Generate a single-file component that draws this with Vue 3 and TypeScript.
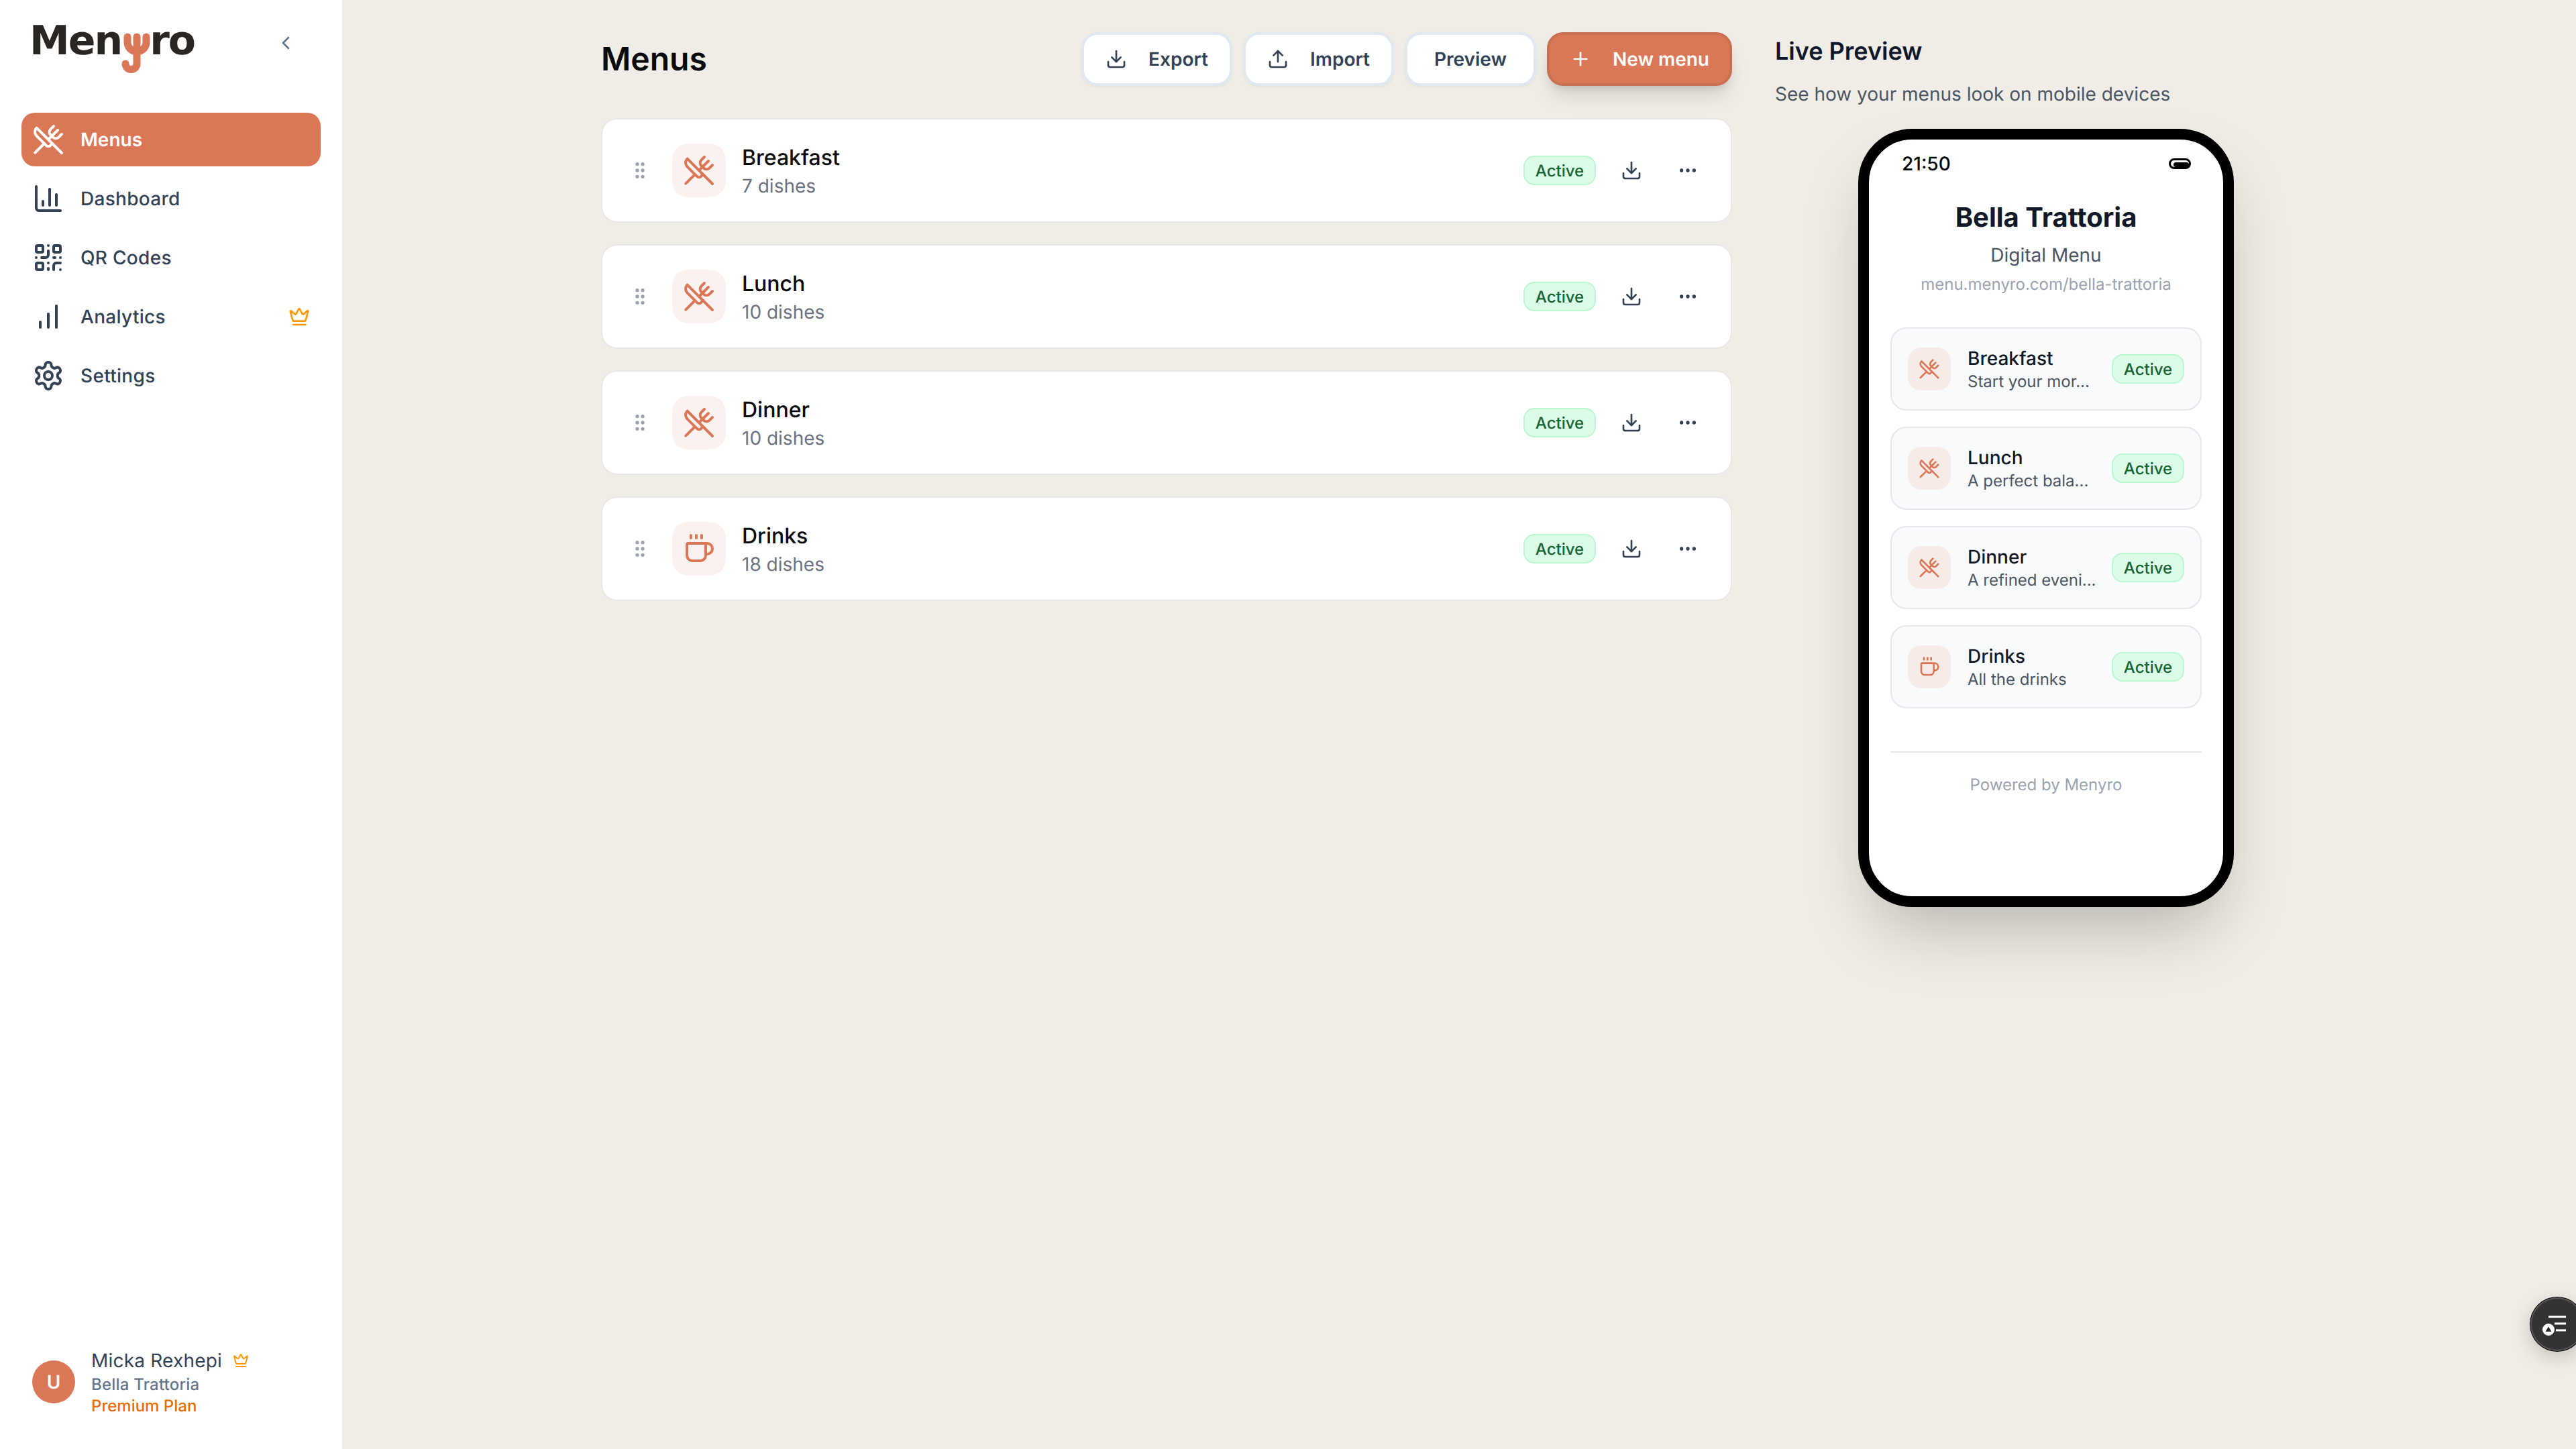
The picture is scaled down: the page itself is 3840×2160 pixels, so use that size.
<script setup lang="ts">
import { h, type FunctionalComponent } from 'vue'

const dot = (cx: number, cy: number) => `M${cx - 1} ${cy}a1 1 0 1 0 2 0a1 1 0 1 0-2 0`
const box = (x: number, y: number) => `M${x + 1} ${y}h3a1 1 0 0 1 1 1v3a1 1 0 0 1-1 1h-3a1 1 0 0 1-1-1v-3a1 1 0 0 1 1-1z`

const icons: Record<string, string[]> = {
  utensils: [
    'm16 2-2.3 2.3a3 3 0 0 0 0 4.2l1.8 1.8a3 3 0 0 0 4.2 0L22 8',
    'M15 15 3.3 3.3a4.2 4.2 0 0 0 0 6l7.3 7.3c.7.7 2 .7 2.8 0L15 15Zm0 0 7 7',
    'm2.1 21.8 6.4-6.3',
    'm19 5-7 7',
  ],
  coffee: [
    'M10 2v2',
    'M14 2v2',
    'M16 8a1 1 0 0 1 1 1v8a4 4 0 0 1-4 4H7a4 4 0 0 1-4-4V9a1 1 0 0 1 1-1h14a4 4 0 1 1 0 8h-1',
    'M6 2v2',
  ],
  chart: ['M3 3v16a2 2 0 0 0 2 2h16', 'M18 17V9', 'M13 17V5', 'M8 17v-3'],
  bars: ['M12 20V10', 'M18 20V4', 'M6 20v-4'],
  qr: [
    box(3, 3), box(16, 3), box(3, 16),
    'M21 16h-3a2 2 0 0 0-2 2v3', 'M21 21v.01', 'M12 7v3a2 2 0 0 1-2 2H7', 'M3 12h.01',
    'M12 3h.01', 'M12 16v.01', 'M16 12h1', 'M21 12v.01', 'M12 21v-1',
  ],
  gear: [
    'M12.22 2h-.44a2 2 0 0 0-2 2v.18a2 2 0 0 1-1 1.73l-.43.25a2 2 0 0 1-2 0l-.15-.08a2 2 0 0 0-2.73.73l-.22.38a2 2 0 0 0 .73 2.73l.15.1a2 2 0 0 1 1 1.72v.51a2 2 0 0 1-1 1.74l-.15.09a2 2 0 0 0-.73 2.73l.22.38a2 2 0 0 0 2.73.73l.15-.08a2 2 0 0 1 2 0l.43.25a2 2 0 0 1 1 1.73V20a2 2 0 0 0 2 2h.44a2 2 0 0 0 2-2v-.18a2 2 0 0 1 1-1.73l.43-.25a2 2 0 0 1 2 0l.15.08a2 2 0 0 0 2.73-.73l.22-.39a2 2 0 0 0-.73-2.73l-.15-.08a2 2 0 0 1-1-1.74v-.5a2 2 0 0 1 1-1.74l.15-.09a2 2 0 0 0 .73-2.73l-.22-.38a2 2 0 0 0-2.73-.73l-.15.08a2 2 0 0 1-2 0l-.43-.25a2 2 0 0 1-1-1.73V4a2 2 0 0 0-2-2z',
    'M9 12a3 3 0 1 0 6 0a3 3 0 1 0-6 0',
  ],
  crown: [
    'M11.562 3.266a.5.5 0 0 1 .876 0L15.39 8.87a1 1 0 0 0 1.516.294L21.183 5.5a.5.5 0 0 1 .798.519l-2.834 10.246a1 1 0 0 1-.956.734H5.81a1 1 0 0 1-.957-.734L2.02 6.02a.5.5 0 0 1 .798-.519l4.276 3.664a1 1 0 0 0 1.516-.294z',
    'M5 21h14',
  ],
  download: ['M12 15V3', 'M21 15v4a2 2 0 0 1-2 2H5a2 2 0 0 1-2-2v-4', 'm7 10 5 5 5-5'],
  upload: ['M12 3v12', 'm17 8-5-5-5 5', 'M21 15v4a2 2 0 0 1-2 2H5a2 2 0 0 1-2-2v-4'],
  plus: ['M5 12h14', 'M12 5v14'],
  more: [dot(12, 12), dot(19, 12), dot(5, 12)],
  grip: [dot(9, 12), dot(9, 5), dot(9, 19), dot(15, 12), dot(15, 5), dot(15, 19)],
  back: ['m15 18-6-6 6-6'],
}

const Icon: FunctionalComponent<{ name: string }> = (props) =>
  h(
    'svg',
    {
      viewBox: '0 0 24 24',
      fill: 'none',
      stroke: 'currentColor',
      'stroke-width': 2,
      'stroke-linecap': 'round',
      'stroke-linejoin': 'round',
    },
    icons[props.name].map((d) => h('path', { d })),
  )
Icon.props = ['name']

const nav = [
  { label: 'Menus', icon: 'utensils', active: true },
  { label: 'Dashboard', icon: 'chart' },
  { label: 'QR Codes', icon: 'qr' },
  { label: 'Analytics', icon: 'bars', premium: true },
  { label: 'Settings', icon: 'gear' },
]

const menus = [
  { name: 'Breakfast', dishes: '7 dishes', icon: 'utensils', blurb: 'Start your mor...' },
  { name: 'Lunch', dishes: '10 dishes', icon: 'utensils', blurb: 'A perfect bala...' },
  { name: 'Dinner', dishes: '10 dishes', icon: 'utensils', blurb: 'A refined eveni...' },
  { name: 'Drinks', dishes: '18 dishes', icon: 'coffee', blurb: 'All the drinks' },
]
</script>

<template>
  <div class="app">
    <aside class="sidebar">
      <div class="brand">
        <div class="logo">
          <span>Men</span>
          <svg class="fork" viewBox="0 0 48 72" fill="none" stroke="#d97757" stroke-width="11" stroke-linecap="round">
            <path d="M10 14v8a14 14 0 0 0 28 0v-8" />
            <path d="M24 14v40a8.5 8.5 0 0 1-17 0" />
          </svg>
          <span>ro</span>
        </div>
        <Icon name="back" class="collapse" />
      </div>

      <nav class="nav">
        <a v-for="item in nav" :key="item.label" class="nav-item" :class="{ active: item.active }">
          <Icon :name="item.icon" class="nav-icon" />
          <span class="nav-label">{{ item.label }}</span>
          <Icon v-if="item.premium" name="crown" class="nav-crown" />
        </a>
      </nav>

      <div class="account">
        <div class="avatar">U</div>
        <div class="account-text">
          <div class="account-name">Micka Rexhepi <Icon name="crown" class="name-crown" /></div>
          <div class="account-org">Bella Trattoria</div>
          <div class="account-plan">Premium Plan</div>
        </div>
      </div>
    </aside>

    <main class="content">
      <section class="menus">
        <header class="head">
          <h1>Menus</h1>
          <div class="actions">
            <button class="btn"><Icon name="download" class="btn-icon" />Export</button>
            <button class="btn"><Icon name="upload" class="btn-icon" />Import</button>
            <button class="btn text-only">Preview</button>
            <button class="btn primary"><Icon name="plus" class="btn-icon" />New menu</button>
          </div>
        </header>

        <div class="list">
          <article v-for="m in menus" :key="m.name" class="card">
            <Icon name="grip" class="grip" />
            <div class="tile"><Icon :name="m.icon" class="tile-icon" /></div>
            <div class="card-text">
              <div class="card-name">{{ m.name }}</div>
              <div class="card-sub">{{ m.dishes }}</div>
            </div>
            <span class="badge">Active</span>
            <Icon name="download" class="row-icon first" />
            <Icon name="more" class="row-icon" />
          </article>
        </div>
      </section>

      <section class="preview">
        <h2>Live Preview</h2>
        <p class="preview-sub">See how your menus look on mobile devices</p>
        <div class="phone">
          <div class="screen">
            <div class="status">
              <span>21:50</span>
              <span class="battery"></span>
            </div>
            <div class="venue">Bella Trattoria</div>
            <div class="venue-sub">Digital Menu</div>
            <div class="venue-url">menu.menyro.com/bella-trattoria</div>
            <div class="m-list">
              <div v-for="m in menus" :key="m.name" class="m-card">
                <div class="m-tile"><Icon :name="m.icon" class="m-icon" /></div>
                <div class="m-text">
                  <div class="m-name">{{ m.name }}</div>
                  <div class="m-sub">{{ m.blurb }}</div>
                </div>
                <span class="badge">Active</span>
              </div>
            </div>
            <div class="powered">Powered by Menyro</div>
          </div>
        </div>
      </section>
    </main>

    <div class="fab">
      <svg viewBox="0 0 80 80" width="80" height="80">
        <path d="M27 29h26M36 39h17M38 49h15" stroke="#fff" stroke-width="3" fill="none" />
        <circle cx="27" cy="48" r="9" fill="#fff" />
        <path d="M27 43.5l4.5 7.5h-9z" fill="#222" />
      </svg>
    </div>
  </div>
</template>

<style>
html,
body {
  margin: 0;
  background: #f0ede6;
  overflow: hidden;
}
</style>

<style scoped>
.app {
  width: 3840px;
  height: 2160px;
  display: flex;
  position: relative;
  overflow: hidden;
  background: #f0ede6;
  font-family: Inter, "Liberation Sans", sans-serif;
  color: #0a0a0a;
  text-rendering: geometricPrecision;
}

/* sidebar */
.sidebar {
  width: 510px;
  height: 2160px;
  box-sizing: content-box;
  flex: none;
  background: #fff;
  border-right: 2px solid #e5e7eb;
  display: flex;
  flex-direction: column;
}
.brand {
  height: 64px;
  margin: 32px 0 72px;
  padding: 0 48px;
  display: flex;
  align-items: flex-start;
  position: relative;
}
.logo {
  display: flex;
  margin-left: -4px;
  font: 700 60px/56px "DejaVu Sans", sans-serif;
  letter-spacing: -2px;
  color: #2a2624;
  padding-top: 1px;
}
.fork {
  width: 48px;
  height: 72px;
  margin: 8px -5px 0 -1px;
  flex: none;
}
.collapse {
  width: 32px;
  height: 32px;
  color: #64748b;
  margin: 16px 0 0 auto;
  position: relative;
  right: 20px;
}
.nav {
  display: flex;
  flex-direction: column;
  gap: 8px;
  padding: 0 32px;
}
.nav-item {
  height: 80px;
  padding: 0 16px;
  display: flex;
  align-items: center;
  gap: 24px;
  border-radius: 20px;
  font-size: 28px;
  font-weight: 500;
  letter-spacing: 0.3px;
  color: #334155;
}
.nav-item.active {
  background: #d97757;
  color: #fff;
  font-weight: 600;
  letter-spacing: 0;
}
.nav-icon {
  width: 48px;
  height: 48px;
  flex: none;
}
.nav-label {
  flex: 1;
}
.nav-crown {
  width: 32px;
  height: 32px;
  color: #ff9800;
}
.account {
  margin-top: auto;
  padding: 0 48px 48px;
  display: flex;
  align-items: center;
  gap: 24px;
}
.avatar {
  width: 64px;
  height: 64px;
  flex: none;
  border-radius: 50%;
  background: #d97757;
  color: #fff;
  font-size: 28px;
  font-weight: 600;
  display: flex;
  align-items: center;
  justify-content: center;
}
.account-name {
  font-size: 28px;
  line-height: 40px;
  letter-spacing: 0.2px;
  color: #334155;
  display: flex;
  align-items: center;
  gap: 16px;
}
.name-crown {
  width: 24px;
  height: 24px;
  color: #ff9800;
}
.account-org {
  font-size: 24px;
  line-height: 32px;
  font-weight: 500;
  letter-spacing: 0.2px;
  color: #64748b;
}
.account-plan {
  font-size: 24px;
  line-height: 32px;
  font-weight: 500;
  color: #ea6c00;
}

/* main */
.content {
  flex: 1;
  padding: 48px 386px 0 384px;
  display: flex;
  gap: 64px;
  min-width: 0;
}
.menus {
  width: 1686px;
  flex: none;
}
.head {
  height: 80px;
  display: flex;
  align-items: center;
  justify-content: space-between;
  margin-bottom: 48px;
}
h1 {
  margin: 0;
  font-size: 48px;
  font-weight: 600;
  line-height: 64px;
}
.actions {
  display: flex;
  gap: 16px;
}
.btn {
  height: 80px;
  padding: 0 32px;
  display: flex;
  align-items: center;
  gap: 32px;
  background: #fff;
  border: 4px solid #e2e8f0;
  border-radius: 24px;
  font: 600 28px Inter, sans-serif;
  color: #334155;
  box-shadow: 0 2px 4px rgba(0, 0, 0, 0.05);
  text-rendering: geometricPrecision;
}
.btn.text-only {
  padding: 0 40px;
}
.btn.primary {
  padding: 0 30px;
  background: #d97757;
  border-color: #c96f52;
  color: #fff;
  box-shadow: 0 20px 30px -6px rgba(0, 0, 0, 0.12), 0 8px 12px -4px rgba(0, 0, 0, 0.1);
}
.btn-icon {
  width: 32px;
  height: 32px;
  flex: none;
}
.list {
  display: flex;
  flex-direction: column;
  gap: 32px;
}
.card {
  height: 156px;
  box-sizing: border-box;
  background: #fff;
  border: 2px solid #e8e8e8;
  border-radius: 24px;
  padding: 0 48px 0 40px;
  display: flex;
  align-items: center;
}
.grip {
  width: 32px;
  height: 32px;
  color: #9ca3af;
  flex: none;
}
.tile {
  width: 80px;
  height: 80px;
  margin-left: 32px;
  border-radius: 24px;
  background: #fbf1ee;
  color: #d97757;
  display: flex;
  align-items: center;
  justify-content: center;
  flex: none;
}
.tile-icon {
  width: 48px;
  height: 48px;
}
.card-text {
  flex: 1;
  margin-left: 24px;
  padding-top: 2px;
}
.card-name {
  font-size: 32px;
  line-height: 44px;
  font-weight: 500;
}
.card-sub {
  font-size: 28px;
  line-height: 40px;
  color: #6b7280;
}
.badge {
  width: 108px;
  height: 44px;
  box-sizing: border-box;
  flex: none;
  background: #dcfce7;
  border: 2px solid #bbf7d0;
  border-radius: 16px;
  color: #166534;
  font-size: 24px;
  font-weight: 500;
  display: flex;
  align-items: center;
  justify-content: center;
}
.row-icon {
  width: 32px;
  height: 32px;
  color: #334155;
  flex: none;
  margin-left: 52px;
}
.row-icon.first {
  margin-left: 37px;
}

/* preview */
.preview {
  width: 808px;
  flex: none;
}
h2 {
  margin: 0;
  font-size: 36px;
  font-weight: 600;
  line-height: 56px;
  color: #0f172a;
}
.preview-sub {
  margin: 16px 0 32px;
  font-size: 28px;
  line-height: 40px;
  color: #4b5563;
}
.phone {
  width: 560px;
  height: 1160px;
  box-sizing: border-box;
  margin: 0 auto;
  border: 16px solid #000;
  border-radius: 80px;
  background: #fff;
  box-shadow: 0 50px 100px -24px rgba(0, 0, 0, 0.25);
  overflow: hidden;
}
.screen {
  padding: 0 32px;
}
.status {
  height: 72px;
  margin: 0 16px 0 17px;
  display: flex;
  align-items: center;
  justify-content: space-between;
  font-size: 28px;
  font-weight: 500;
  color: #000;
}
.battery {
  width: 33px;
  height: 16px;
  box-sizing: border-box;
  position: relative;
  background: #fff;
  border: 3px solid #000;
  border-radius: 8px;
}
.battery::after {
  content: "";
  position: absolute;
  left: 4px;
  right: 0;
  top: 3px;
  bottom: 0;
  background: #000;
  border-radius: 5px;
}
.venue {
  margin-top: 16px;
  text-align: center;
  font-size: 40px;
  font-weight: 700;
  line-height: 56px;
  color: #111827;
}
.venue-sub {
  margin-top: 8px;
  text-align: center;
  font-size: 28px;
  line-height: 40px;
  color: #4b5563;
}
.venue-url {
  margin-top: 6px;
  text-align: center;
  font-size: 24px;
  line-height: 36px;
  color: #9ca3af;
}
.m-list {
  margin-top: 46px;
  display: flex;
  flex-direction: column;
  gap: 24px;
  padding-bottom: 64px;
  border-bottom: 2px solid #e5e7eb;
}
.m-card {
  height: 124px;
  box-sizing: border-box;
  padding: 0 24px;
  background: #f9fafb;
  border: 2px solid #e5e7eb;
  border-radius: 24px;
  display: flex;
  align-items: center;
  gap: 24px;
}
.m-tile {
  width: 64px;
  height: 64px;
  flex: none;
  border-radius: 20px;
  background: #f6ebe7;
  color: #d97757;
  display: flex;
  align-items: center;
  justify-content: center;
}
.m-icon {
  width: 32px;
  height: 32px;
}
.m-text {
  flex: 1;
  min-width: 0;
  padding-left: 1px;
  white-space: nowrap;
}
.m-name {
  font-size: 28px;
  line-height: 36px;
  font-weight: 500;
  color: #111827;
}
.m-sub {
  font-size: 24px;
  line-height: 32px;
  margin-top: 1px;
  color: #4b5563;
}
.powered {
  margin-top: 32px;
  text-align: center;
  font-size: 24px;
  line-height: 32px;
  color: #9ca3af;
}

.fab {
  position: absolute;
  left: 3772px;
  top: 1934px;
  width: 80px;
  height: 80px;
  box-sizing: border-box;
  border-radius: 50%;
  background: #333;
  box-shadow: 0 0 0 1px #000, inset 0 0 0 2px #555, 0 8px 30px rgba(0, 0, 0, 0.2);
}
.fab svg {
  display: block;
}
</style>
